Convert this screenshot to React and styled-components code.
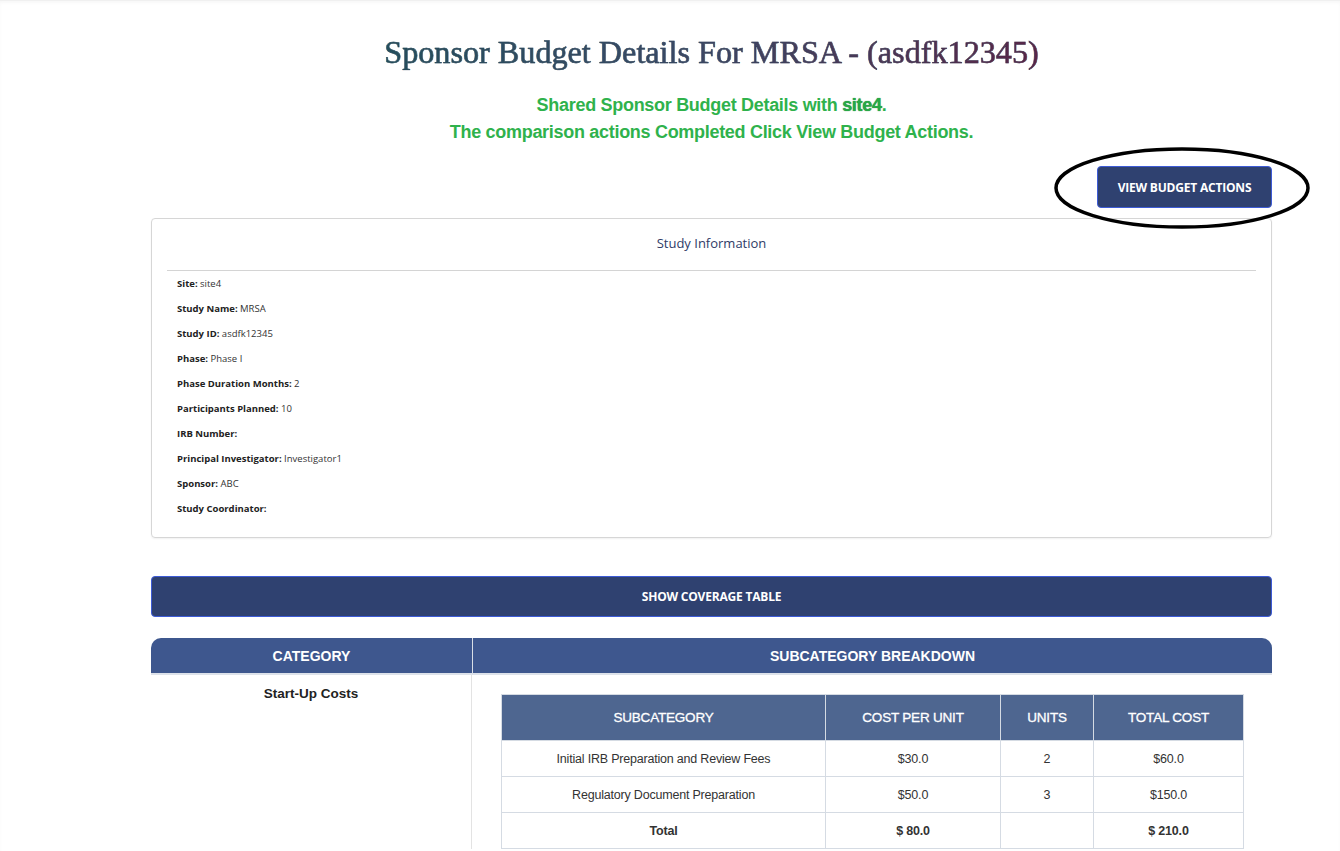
import React from 'react'
import styled, { createGlobalStyle } from 'styled-components'

const GlobalStyle = createGlobalStyle`
  * { box-sizing: border-box; }
  body {
    margin: 0;
    background: #fff;
    font-family: "Open Sans", "Liberation Sans", sans-serif;
    color: #212529;
  }
`

const studyInfo = [
  { label: 'Site', value: 'site4' },
  { label: 'Study Name', value: 'MRSA' },
  { label: 'Study ID', value: 'asdfk12345' },
  { label: 'Phase', value: 'Phase I' },
  { label: 'Phase Duration Months', value: '2' },
  { label: 'Participants Planned', value: '10' },
  { label: 'IRB Number', value: '' },
  { label: 'Principal Investigator', value: 'Investigator1' },
  { label: 'Sponsor', value: 'ABC' },
  { label: 'Study Coordinator', value: '' },
]

const lines = [
  { name: 'Initial IRB Preparation and Review Fees', cost: '$30.0', units: '2', total: '$60.0' },
  { name: 'Regulatory Document Preparation', cost: '$50.0', units: '3', total: '$150.0' },
]

const Page = styled.div`
  min-height: 851px;
  border-top: 1px solid #f0f0f0;
  box-shadow: inset 0 2px 3px rgba(0,0,0,0.03);
  padding: 0 68px 0 151px;
`

const Title = styled.h1`
  margin: 0;
  padding-top: 32px;
  text-align: center;
  font-family: "Liberation Serif", "DejaVu Serif", serif;
  font-weight: 400;
  font-size: 32.2px;
  line-height: 38px;
  span {
    background: linear-gradient(90deg, #244f5c 0%, #3a4a66 45%, #5a2547 100%);
    -webkit-background-clip: text;
    background-clip: text;
    color: transparent;
    -webkit-text-stroke: 0.5px rgba(40,60,80,0.6);
  }
`

const Notice = styled.div`
  margin-top: 21px;
  text-align: center;
  color: #2fb24c;
  font-family: "Liberation Sans", sans-serif;
  font-weight: 700;
  font-size: 18px;
  line-height: 27px;
  letter-spacing: -0.3px;
  b {
    color: #27a845;
    text-shadow: 0 0 1px #1d7a32;
  }
`

const ActionBar = styled.div`
  display: flex;
  justify-content: flex-end;
  margin-top: 20px;
  margin-bottom: 10px;
`

const ActionWrap = styled.div`
  position: relative;
`

const Ring = styled.svg`
  position: absolute;
  left: -43px;
  top: -19px;
  width: 256px;
  height: 82px;
  pointer-events: none;
  overflow: visible;
`

const NavyButton = styled.button`
  display: flex;
  align-items: center;
  justify-content: center;
  background: #2f4170;
  color: #fff;
  border: 1px solid #3d5bd6;
  border-radius: 4px;
  font-family: "Open Sans", sans-serif;
  font-weight: 700;
  font-size: 12px;
  letter-spacing: -0.2px;
  cursor: pointer;
  width: ${p => p.$full ? '100%' : '175px'};
  height: ${p => p.$full ? '41px' : '42px'};
  text-transform: uppercase;
`

const Card = styled.section`
  border: 1px solid #d6d6d6;
  border-radius: 4px;
  box-shadow: 0 1px 2px rgba(0,0,0,0.06);
  padding: 0 15px 12px;
`

const CardHead = styled.div`
  text-align: center;
  color: #2f3b67;
  font-size: 13px;
  font-weight: 500;
  height: 52px;
  line-height: 48px;
  border-bottom: 1px solid #d4d4d4;
`

const InfoList = styled.div`
  padding: 4px 10px 0;
`

const InfoRow = styled.p`
  margin: 0;
  height: 25px;
  line-height: 17px;
  font-size: 9.5px;
  color: #333;
  b { color: #222; font-weight: 700; }
`

const CoverageBar = styled.div`
  margin-top: 38px;
`

const BudgetTable = styled.table`
  width: 100%;
  margin-top: 21px;
  border-collapse: separate;
  border-spacing: 0;
  font-family: "Liberation Sans", Arial, sans-serif;
`

const HeadCell = styled.th`
  background: #3e578e;
  color: #fff;
  font-size: 14px;
  font-weight: 700;
  height: 37px;
  border-bottom: 2px solid #dde2ea;
  border-left: ${p => p.$first ? 'none' : '1px solid #d9dee6'};
  border-radius: ${p => p.$first ? '10px 0 0 0' : '0 10px 0 0'};
  width: ${p => p.$first ? '321px' : 'auto'};
`

const CategoryCell = styled.td`
  vertical-align: top;
  text-align: center;
  font-size: 13.5px;
  font-weight: 700;
  color: #222;
  padding-top: 11px;
  border-right: 1px solid #e3e3e3;
`

const BreakdownCell = styled.td`
  padding: 19px 28px 0 29px;
  vertical-align: top;
`

const InnerTable = styled.table`
  width: 100%;
  border-collapse: collapse;
  font-size: 12.5px;
  color: #333;
  letter-spacing: -0.2px;
`

const InnerHead = styled.th`
  background: #4e6690;
  color: #fff;
  font-size: 13.5px;
  font-weight: 400;
  height: 46px;
  border: 1px solid #d5dbe3;
  width: ${p => p.$w || 'auto'};
  -webkit-text-stroke: 0.3px #fff;
`

const InnerCell = styled.td`
  text-align: center;
  height: 36px;
  border: 1px solid #d5dbe3;
  font-weight: ${p => p.$bold ? 700 : 400};
`

export default function App() {
  return (
    <>
      <GlobalStyle />
      <Page>
        <Title><span>Sponsor Budget Details For MRSA - (asdfk12345)</span></Title>
        <Notice>
          Shared Sponsor Budget Details with <b>site4</b>.<br />
          The comparison actions Completed Click View Budget Actions.
        </Notice>

        <ActionBar>
          <ActionWrap>
            <Ring viewBox="0 0 256 82">
              <ellipse cx="128" cy="41" rx="126" ry="39" fill="none" stroke="#000" strokeWidth="3.5" />
            </Ring>
            <NavyButton>View Budget Actions</NavyButton>
          </ActionWrap>
        </ActionBar>

        <Card>
          <CardHead>Study Information</CardHead>
          <InfoList>
            {studyInfo.map(item => (
              <InfoRow key={item.label}>
                <b>{item.label}:</b> {item.value}
              </InfoRow>
            ))}
          </InfoList>
        </Card>

        <CoverageBar>
          <NavyButton $full>Show Coverage Table</NavyButton>
        </CoverageBar>

        <BudgetTable>
          <thead>
            <tr>
              <HeadCell $first>CATEGORY</HeadCell>
              <HeadCell>SUBCATEGORY BREAKDOWN</HeadCell>
            </tr>
          </thead>
          <tbody>
            <tr>
              <CategoryCell>Start-Up Costs</CategoryCell>
              <BreakdownCell>
                <InnerTable>
                  <thead>
                    <tr>
                      <InnerHead $w="324px">SUBCATEGORY</InnerHead>
                      <InnerHead $w="175px">COST PER UNIT</InnerHead>
                      <InnerHead $w="93px">UNITS</InnerHead>
                      <InnerHead>TOTAL COST</InnerHead>
                    </tr>
                  </thead>
                  <tbody>
                    {lines.map(l => (
                      <tr key={l.name}>
                        <InnerCell>{l.name}</InnerCell>
                        <InnerCell>{l.cost}</InnerCell>
                        <InnerCell>{l.units}</InnerCell>
                        <InnerCell>{l.total}</InnerCell>
                      </tr>
                    ))}
                    <tr>
                      <InnerCell $bold>Total</InnerCell>
                      <InnerCell $bold>$ 80.0</InnerCell>
                      <InnerCell></InnerCell>
                      <InnerCell $bold>$ 210.0</InnerCell>
                    </tr>
                  </tbody>
                </InnerTable>
              </BreakdownCell>
            </tr>
          </tbody>
        </BudgetTable>
      </Page>
    </>
  )
}
